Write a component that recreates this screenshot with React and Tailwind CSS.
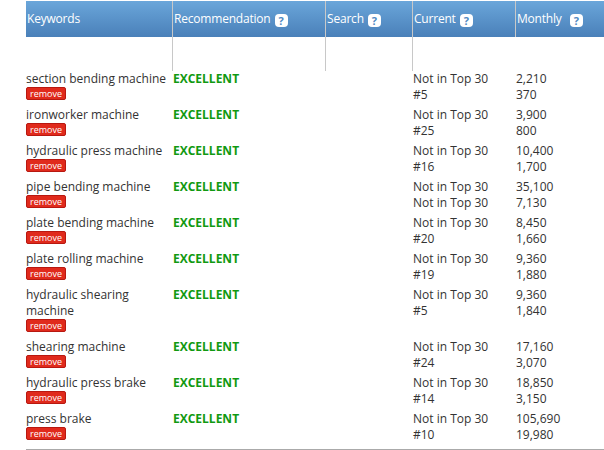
const rows = [
  ["section bending machine", "Not in Top 30", "#5", "2,210", "370"],
  ["ironworker machine", "Not in Top 30", "#25", "3,900", "800"],
  ["hydraulic press machine", "Not in Top 30", "#16", "10,400", "1,700"],
  ["pipe bending machine", "Not in Top 30", "Not in Top 30", "35,100", "7,130"],
  ["plate bending machine", "Not in Top 30", "#20", "8,450", "1,660"],
  ["plate rolling machine", "Not in Top 30", "#19", "9,360", "1,880"],
  ["hydraulic shearing machine", "Not in Top 30", "#5", "9,360", "1,840"],
  ["shearing machine", "Not in Top 30", "#24", "17,160", "3,070"],
  ["hydraulic press brake", "Not in Top 30", "#14", "18,850", "3,150"],
  ["press brake", "Not in Top 30", "#10", "105,690", "19,980"],
];

function Q() {
  return (
    <span className="inline-flex items-center justify-center w-[13px] h-[13px] rounded-[4px] bg-white text-[#4f89c2] text-[11px] font-bold leading-none ml-[4px]">?</span>
  );
}

export default function App() {
  return (
    <div className="w-[604px] h-[450px] bg-white pl-[26px] text-[12px] text-[#333] overflow-hidden" style={{ fontFamily: "'Open Sans', sans-serif" }}>
      <div className="flex h-[36px] mt-[1px] bg-gradient-to-b from-[#6aa6da] to-[#4a80b9] text-white text-[12px] tracking-[-0.2px]">
        <div className="w-[146px] pt-[9px] pl-[1px]">Keywords</div>
        <div className="w-[153px] pt-[9px] pl-[1px] border-l border-[#c8c8c8] flex items-start">Recommendation<span className="mt-[2px]"><Q /></span></div>
        <div className="w-[87px] pt-[9px] pl-[1px] border-l border-[#c8c8c8] flex items-start">Search<span className="mt-[2px]"><Q /></span></div>
        <div className="w-[103px] pt-[9px] pl-[1px] border-l border-[#c8c8c8] flex items-start">Current<span className="mt-[2px]"><Q /></span></div>
        <div className="flex-1 pt-[9px] pl-[1px] border-l border-[#c8c8c8] flex items-start">Monthly<span className="mt-[2px] ml-[4px]"><Q /></span></div>
      </div>
      <div className="flex h-[34px]">
        <div className="w-[146px]"></div>
        <div className="w-[153px] border-l border-[#c8c8c8]"></div>
        <div className="w-[87px] border-l border-[#c8c8c8]"></div>
        <div className="w-[103px] border-l border-[#c8c8c8]"></div>
        <div className="flex-1"></div>
      </div>
      <div className="border-b border-[#aaa] pb-[2px]">
        {rows.map((r, i) => (
          <div key={i} className="flex min-h-[36px] leading-[16px] pb-[4px]">
            <div className="w-[146px] pr-[2px]">
              <div>{r[0]}</div>
              <div className="inline-block bg-[#e02a1c] text-white text-[9px] leading-[11px] px-[3px] rounded-[2px] border border-[#b81810] align-top">remove</div>
            </div>
            <div className="w-[240px] font-bold text-[#119911] pl-[1px]">EXCELLENT</div>
            <div className="w-[103px] pl-[1px]">
              <div>{r[1]}</div>
              <div>{r[2]}</div>
            </div>
            <div className="flex-1 pl-[1px]">
              <div>{r[3]}</div>
              <div>{r[4]}</div>
            </div>
          </div>
        ))}
      </div>
    </div>
  );
}
